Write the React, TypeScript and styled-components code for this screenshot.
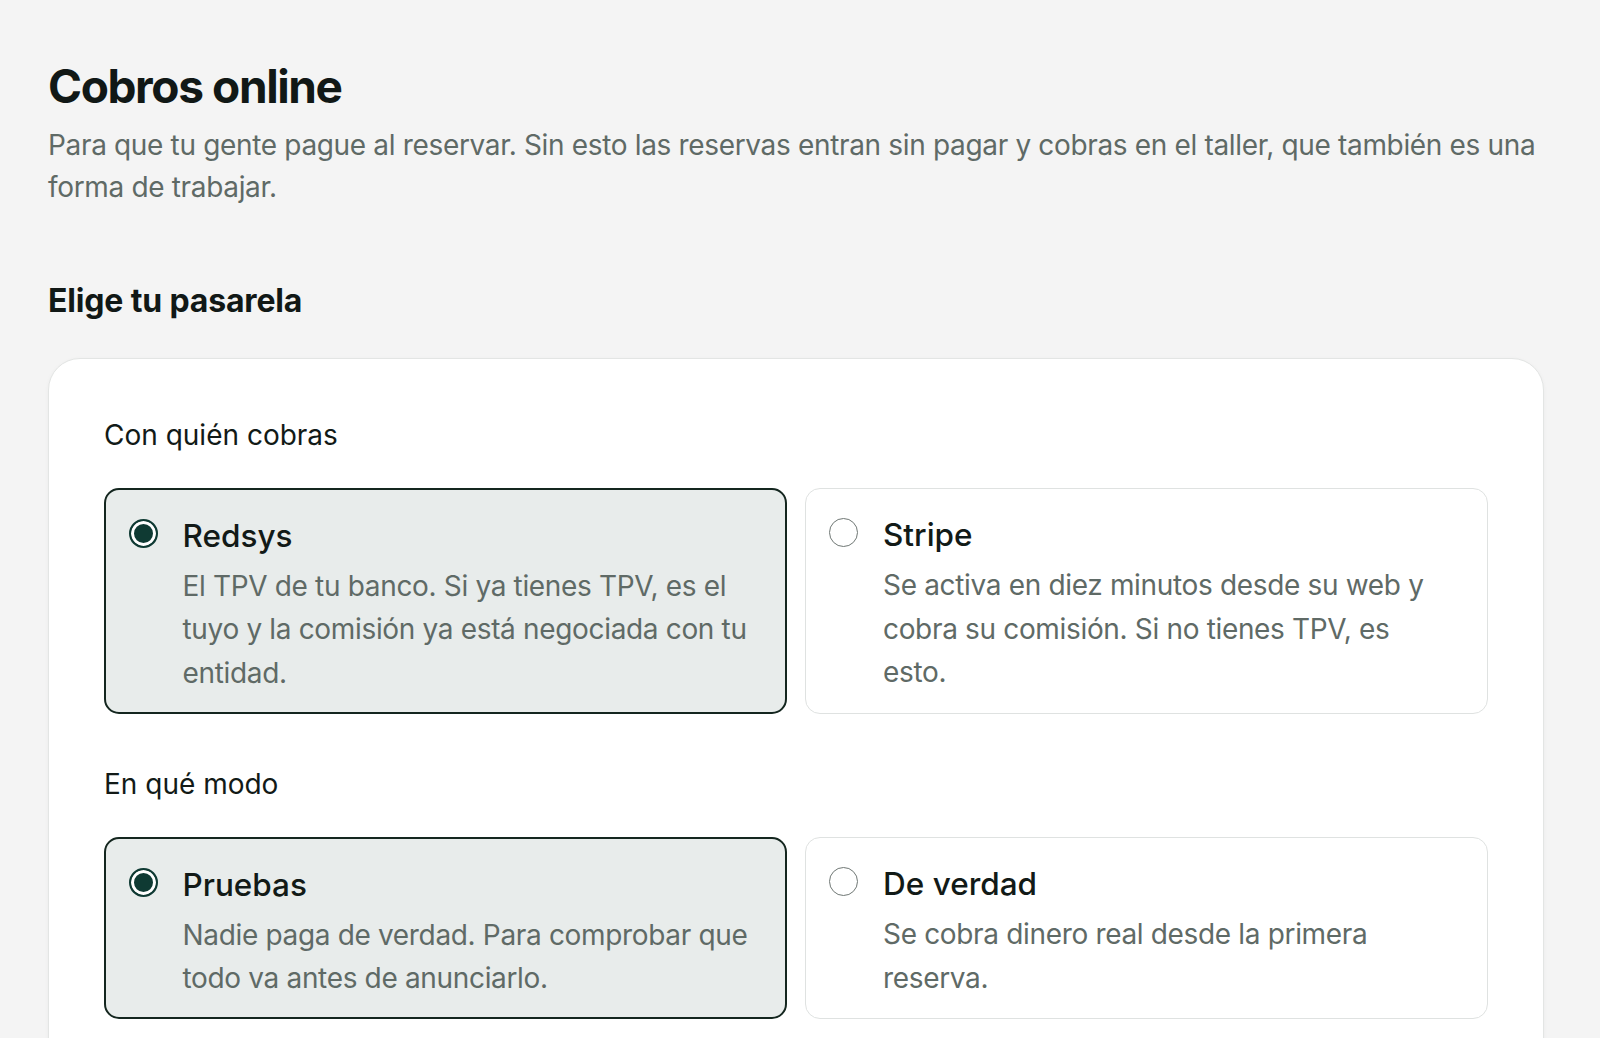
import React, { useState } from "react";
import styled, { createGlobalStyle, css } from "styled-components";

const GlobalStyle = createGlobalStyle`
  html, body {
    margin: 0;
    padding: 0;
    background: #f4f4f4;
    overflow: hidden;
  }
  * { box-sizing: border-box; }
`;

const Page = styled.main`
  height: 100vh;
  overflow: hidden;
  padding: 59px 56px 0 48px;
  background: #f4f4f4;
  font-family: Inter, "Noto Sans", "Liberation Sans", sans-serif;
  color: #121a17;
`;

const Title = styled.h1`
  margin: 0;
  font-size: 46px;
  line-height: 54px;
  font-weight: 700;
  letter-spacing: -0.03em;
  color: #111816;
`;

const Lead = styled.p`
  margin: 11px 0 0;
  font-size: 28px;
  line-height: 42px;
  font-weight: 400;
  letter-spacing: -0.012em;
  color: #5f6a66;
`;

const SectionTitle = styled.h2`
  margin: 72px 0 0;
  font-size: 32px;
  line-height: 41.6px;
  font-weight: 700;
  letter-spacing: -0.005em;
  color: #111816;
`;

const Card = styled.section`
  margin-top: 36px;
  background: #ffffff;
  border: 1px solid #e3e5e4;
  border-radius: 32px;
  box-shadow: 0 1px 4px rgba(20, 30, 25, 0.04);
  padding: 55px;
`;

const Group = styled.fieldset<{ $spaced?: boolean }>`
  border: 0;
  margin: ${(p) => (p.$spaced ? "49px 0 0" : "0")};
  padding: 0;
  min-width: 0;
`;

const FieldLabel = styled.legend`
  padding: 0;
  font-size: 28px;
  line-height: 42px;
  font-weight: 400;
  color: #121a17;
`;

const OptionGrid = styled.div`
  margin-top: 32px;
  display: grid;
  grid-template-columns: 1fr 1fr;
  gap: 18px;
`;

const Option = styled.label<{ $selected: boolean }>`
  display: grid;
  grid-template-columns: 29px 1fr;
  column-gap: 25px;
  align-items: start;
  padding: 26.5px 32px 17px 23px;
  border-radius: 15px;
  border: 1.5px solid #dfe2e1;
  background: #ffffff;
  cursor: pointer;
  ${(p) =>
    p.$selected &&
    css`
      border: 2px solid #14261f;
      padding: 26px 31.5px 16.5px 22.5px;
      background: #e8eceb;
    `}
`;

const HiddenInput = styled.input`
  position: absolute;
  opacity: 0;
  width: 1px;
  height: 1px;
  margin: 0;
  pointer-events: none;
`;

const RadioMark = styled.span<{ $selected: boolean }>`
  display: block;
  width: 29px;
  height: 29px;
  margin-top: 3px;
  border-radius: 50%;
  border: 1.5px solid #6f7774;
  background: #ffffff;
  ${(p) =>
    p.$selected &&
    css`
      border: 2.5px solid #0f3a33;
      background: #0f3a33;
      box-shadow: inset 0 0 0 3px #ffffff;
    `}
`;

const OptionBody = styled.span`
  display: flex;
  flex-direction: column;
  min-width: 0;
`;

const OptionTitle = styled.span`
  font-size: 31.5px;
  line-height: 40px;
  font-weight: 500;
  color: #121a17;
`;

const OptionDesc = styled.span`
  margin-top: 9px;
  font-size: 28px;
  line-height: 43.5px;
  font-weight: 400;
  letter-spacing: -0.012em;
  color: #5f6a66;
`;

type Choice = { value: string; title: string; desc: string };

const gateways: Choice[] = [
  {
    value: "redsys",
    title: "Redsys",
    desc: "El TPV de tu banco. Si ya tienes TPV, es el tuyo y la comisión ya está negociada con tu entidad.",
  },
  {
    value: "stripe",
    title: "Stripe",
    desc: "Se activa en diez minutos desde su web y cobra su comisión. Si no tienes TPV, es esto.",
  },
];

const modes: Choice[] = [
  {
    value: "test",
    title: "Pruebas",
    desc: "Nadie paga de verdad. Para comprobar que todo va antes de anunciarlo.",
  },
  {
    value: "live",
    title: "De verdad",
    desc: "Se cobra dinero real desde la primera reserva.",
  },
];

function RadioGroup({
  name,
  label,
  choices,
  value,
  onChange,
  spaced,
}: {
  name: string;
  label: string;
  choices: Choice[];
  value: string;
  onChange: (v: string) => void;
  spaced?: boolean;
}) {
  return (
    <Group $spaced={spaced}>
      <FieldLabel>{label}</FieldLabel>
      <OptionGrid>
        {choices.map((c) => {
          const selected = c.value === value;
          return (
            <Option key={c.value} $selected={selected}>
              <HiddenInput
                type="radio"
                name={name}
                value={c.value}
                checked={selected}
                onChange={() => onChange(c.value)}
              />
              <RadioMark $selected={selected} aria-hidden="true" />
              <OptionBody>
                <OptionTitle>{c.title}</OptionTitle>
                <OptionDesc>{c.desc}</OptionDesc>
              </OptionBody>
            </Option>
          );
        })}
      </OptionGrid>
    </Group>
  );
}

export default function App() {
  const [gateway, setGateway] = useState("redsys");
  const [mode, setMode] = useState("test");
  return (
    <>
      <GlobalStyle />
      <Page>
        <Title>Cobros online</Title>
        <Lead>
          Para que tu gente pague al reservar. Sin esto las reservas entran sin pagar y cobras en el
          taller, que también es una forma de trabajar.
        </Lead>
        <SectionTitle>Elige tu pasarela</SectionTitle>
        <Card>
          <RadioGroup
            name="gateway"
            label="Con quién cobras"
            choices={gateways}
            value={gateway}
            onChange={setGateway}
          />
          <RadioGroup
            name="mode"
            label="En qué modo"
            choices={modes}
            value={mode}
            onChange={setMode}
            spaced
          />
        </Card>
      </Page>
    </>
  );
}
